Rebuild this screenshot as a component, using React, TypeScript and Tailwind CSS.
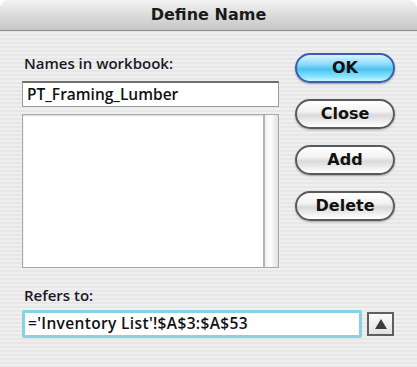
import React from 'react';

const font = { fontFamily: '"DejaVu Sans", "Liberation Sans", sans-serif' };
const textFont = { fontFamily: '"Open Sans", "DejaVu Sans", sans-serif' };

const AquaButton = ({ label, primary }: { label: string; primary?: boolean }) => (
  <button
    type="button"
    className={
      primary
        ? 'h-[30px] w-[100px] rounded-full border-2 border-[#3b5bb5] bg-[linear-gradient(180deg,#d8f4ff_0%,#8fdcfb_35%,#4cc3ef_55%,#8ce6ff_85%,#c8f6ff_100%)] text-[16px] font-bold text-[#111] shadow-[0_1px_2px_rgba(0,0,0,0.35)]'
        : 'h-[30px] w-[100px] rounded-full border-2 border-[#5a5a5a] bg-[linear-gradient(180deg,#ffffff_0%,#f2f2f2_40%,#d9d9d9_55%,#f4f4f4_85%,#ffffff_100%)] text-[16px] font-bold text-[#111] shadow-[0_1px_2px_rgba(0,0,0,0.3)]'
    }
  >
    {label}
  </button>
);

export default function App() {
  return (
    <div className="h-[367px] w-[417px] bg-white" style={font}>
      <div className="flex h-full flex-col overflow-hidden rounded-t-[9px] bg-[repeating-linear-gradient(180deg,#efefef_0px,#efefef_2px,#e7e7e7_2px,#e7e7e7_4px)]">
        <div className="flex h-[31px] shrink-0 items-center justify-center border-b border-[#8c8c8c] bg-[linear-gradient(180deg,#f2f2f2_0%,#dcdcdc_50%,#c6c6c6_100%)]">
          <span className="text-[16px] font-bold text-[#1a1a1a]">Define Name</span>
        </div>

        <div className="flex flex-col px-[22px]" style={textFont}>
          <div className="flex">
            <div className="flex w-[257px] flex-col pt-[23px]">
              <div className="h-[18px] pl-[2px] text-[15px] font-semibold leading-[18px] text-[#1a1a2a]">Names in workbook:</div>
              <div className="mt-[9px] flex h-[26px] items-center border border-[#9c9c9c] border-t-2 border-t-[#6e6e6e] bg-white px-[4px] text-[15.5px] font-semibold text-[#111]">
                PT_Framing_Lumber
              </div>
              <div className="mt-[7px] flex h-[154px] border border-[#a8a8a8] bg-white shadow-[inset_0_1px_2px_rgba(0,0,0,0.15)]">
                <div className="flex-1" />
                <div className="w-[15px] border-l-2 border-[#b4b4b4] bg-[linear-gradient(90deg,#f0f0f0_0%,#ffffff_40%,#e0e0e0_100%)]" />
              </div>
            </div>

            <div className="ml-[16px] flex flex-col gap-[16px] pt-[22px]" style={font}>
              <AquaButton label="OK" primary />
              <AquaButton label="Close" />
              <AquaButton label="Add" />
              <AquaButton label="Delete" />
            </div>
          </div>

          <div className="mt-[18px] h-[18px] pl-[2px] text-[15px] font-semibold leading-[18px] text-[#1a1a2a]">Refers to:</div>
          <div className="mt-[6px] flex items-center">
            <div className="flex h-[28px] w-[340px] items-center rounded-[2px] border-[3px] border-[#86d3e2] bg-white px-[3px] text-[15.5px] font-semibold tracking-[0.35px] text-[#111]">
              ='Inventory List'!$A$3:$A$53
            </div>
            <button
              type="button"
              className="ml-[5px] flex h-[24px] w-[27px] items-center justify-center border-2 border-[#5e5e5e] bg-[linear-gradient(180deg,#fafafa_0%,#e2e2e2_100%)]"
            >
              <svg width="12" height="10" viewBox="0 0 12 10">
                <polygon points="6,0 12,10 0,10" fill="#3c3c3c" />
              </svg>
            </button>
          </div>
        </div>
      </div>
    </div>
  );
}
